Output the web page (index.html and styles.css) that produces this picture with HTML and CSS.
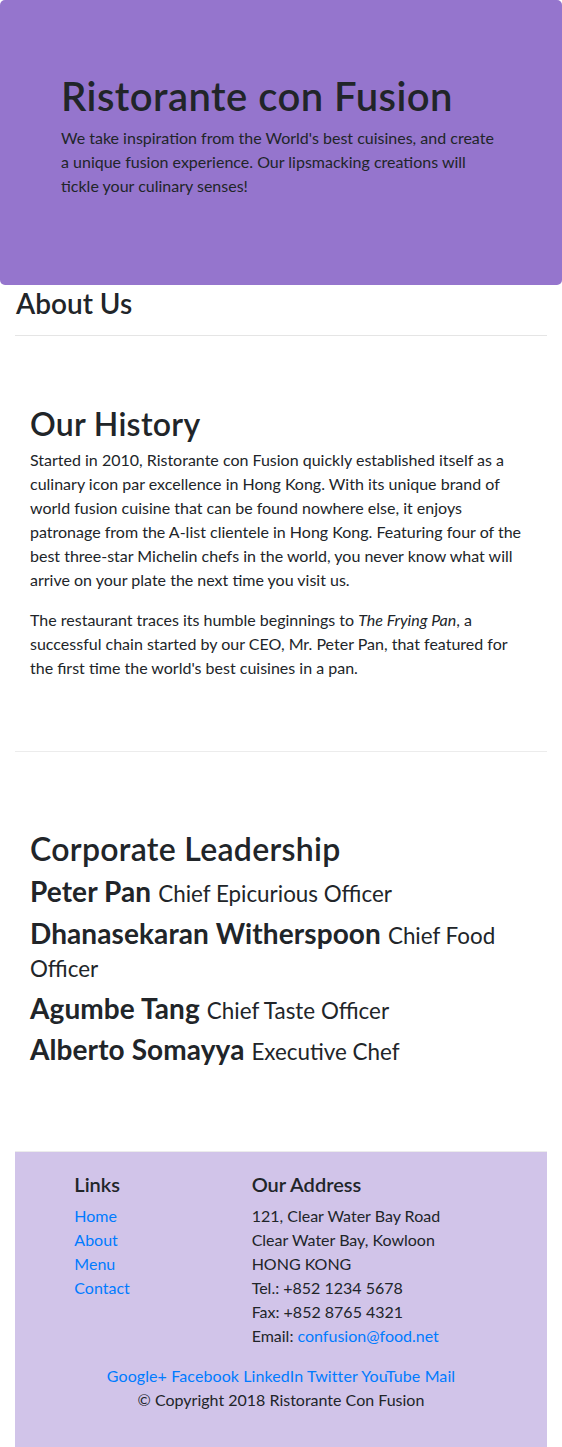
FILE: index.html
```html
<!DOCTYPE html>
<html lang="en">
<head>
<meta charset="utf-8">
<title>Ristorante con Fusion: About Us</title>
<link rel="stylesheet" href="styles.css">
</head>
<body>
<header class="jumbotron">
  <h1 class="jumbo-title">Ristorante con Fusion</h1>
  <p class="jumbo-text">We take inspiration from the World's best cuisines, and create a unique fusion experience. Our lipsmacking creations will tickle your culinary senses!</p>
</header>

<main class="container">
  <div class="page-head">
    <h3 class="page-title">About Us</h3>
    <hr class="rule">
  </div>

  <section class="row-content history">
    <h2 class="section-title">Our History</h2>
    <p class="para">Started in 2010, Ristorante con Fusion quickly established itself as a culinary icon par excellence in Hong Kong. With its unique brand of world fusion cuisine that can be found nowhere else, it enjoys patronage from the A-list clientele in Hong Kong. Featuring four of the best three-star Michelin chefs in the world, you never know what will arrive on your plate the next time you visit us.</p>
    <p class="para">The restaurant traces its humble beginnings to <em>The Frying Pan</em>, a successful chain started by our CEO, Mr. Peter Pan, that featured for the first time the world's best cuisines in a pan.</p>
  </section>

  <section class="row-content leadership">
    <h2 class="section-title">Corporate Leadership</h2>
    <h3 class="leader"><b class="leader-name">Peter Pan</b> <small class="leader-role">Chief Epicurious Officer</small></h3>
    <h3 class="leader"><b class="leader-name">Dhanasekaran Witherspoon</b> <small class="leader-role">Chief Food Officer</small></h3>
    <h3 class="leader"><b class="leader-name">Agumbe Tang</b> <small class="leader-role">Chief Taste Officer</small></h3>
    <h3 class="leader"><b class="leader-name">Alberto Somayya</b> <small class="leader-role">Executive Chef</small></h3>
  </section>

  <footer class="footer">
    <div class="footer-row">
      <div class="col-links">
        <h5 class="footer-title">Links</h5>
        <ul class="link-list">
          <li><a href="#">Home</a></li>
          <li><a href="#">About</a></li>
          <li><a href="#">Menu</a></li>
          <li><a href="#">Contact</a></li>
        </ul>
      </div>
      <div class="col-address">
        <h5 class="footer-title">Our Address</h5>
        <address class="address">
          121, Clear Water Bay Road<br>
          Clear Water Bay, Kowloon<br>
          HONG KONG<br>
          Tel.: +852 1234 5678<br>
          Fax: +852 8765 4321<br>
          Email: <a href="#">confusion@food.net</a>
        </address>
      </div>
      <div class="col-social">
        <a href="#">Google+</a>
        <a href="#">Facebook</a>
        <a href="#">LinkedIn</a>
        <a href="#">Twitter</a>
        <a href="#">YouTube</a>
        <a href="#">Mail</a>
      </div>
    </div>
    <p class="copyright">© Copyright 2018 Ristorante Con Fusion</p>
  </footer>
</main>
</body>
</html>
```

FILE: styles.css
```css
* {
  box-sizing: border-box;
}

html, body {
  margin: 0;
  padding: 0;
}

body {
  font-family: "Lato", "Liberation Sans", sans-serif;
  font-size: 16px;
  line-height: 1.5;
  color: #212529;
  background: #fff;
}

a {
  color: #007bff;
  text-decoration: none;
}

h1, h2, h3, h5 {
  margin: 0 0 8px 0;
  font-weight: 600;
  line-height: 1.2;
}

.jumbotron {
  background: #9575cd;
  border-radius: 5px;
  padding: 70px 61px 71px 61px;
}

.jumbo-title {
  font-size: 40px;
  padding-top: 2px;
  margin-bottom: 6px;
  letter-spacing: 0.45px;
}

.jumbo-text {
  margin: 0 0 16px 0;
}

.container {
  padding: 0 15px;
}

.page-title {
  font-size: 28px;
  margin: 0;
  padding: 2px 1px 0;
}

.rule {
  border: 0;
  border-top: 1px solid rgba(0, 0, 0, 0.1);
  margin: 14px 0 16px;
}

.row-content {
  min-height: 400px;
  padding: 50px 15px;
  border-bottom: 1px solid #ececec;
}

.leadership {
  padding-top: 75px;
}

.section-title {
  font-size: 32px;
  padding-top: 3px;
  margin-bottom: 5px;
  letter-spacing: 0.3px;
}

.para {
  margin: 0 0 16px 0;
}

.leader {
  font-size: 28px;
  padding-top: 2px;
  margin-bottom: 6px;
}

.leader-name {
  font-weight: 700;
  letter-spacing: 0.1px;
}

.leader-role {
  font-size: 80%;
  font-weight: 400;
}

.footer {
  background: #d1c4e9;
  padding: 20px 0;
}

.footer-row {
  display: flex;
  flex-wrap: wrap;
}

.col-links {
  flex: 0 0 33.3333%;
  margin-left: 8.3333%;
  padding: 0 15px;
}

.col-address {
  flex: 0 0 58.3333%;
  padding: 0 15px;
}

.col-social {
  flex: 0 0 100%;
  text-align: center;
  padding: 0 15px;
  letter-spacing: 0.1px;
}

.footer-title {
  font-size: 20px;
}

.link-list {
  list-style: none;
  margin: 0 0 16px 0;
  padding: 0;
}

.address {
  font-style: normal;
  margin: 0 0 16px 0;
}

.copyright {
  margin: 0 0 16px 0;
  text-align: center;
}
```
